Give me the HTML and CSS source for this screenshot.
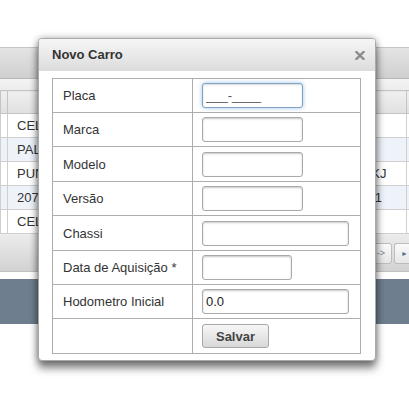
FILE: index.html
```html
<!DOCTYPE html>
<html lang="pt">
<head>
<meta charset="utf-8">
<title>Novo Carro</title>
<link rel="stylesheet" href="styles.css">
</head>
<body>
<div class="app">
  <div class="panel">
    <div class="panel-bar"></div>
    <div class="panel-gap"></div>
    <table class="grid">
      <colgroup><col class="c0"><col class="c1"><col class="c2"><col class="c3"></colgroup>
      <thead><tr><th></th><th></th><th></th><th></th></tr></thead>
      <tbody>
        <tr><td></td><td>CELTA</td><td></td><td></td></tr>
        <tr class="alt"><td></td><td>PALIO</td><td></td><td></td></tr>
        <tr><td></td><td>PUNTO</td><td>ABKJ</td><td></td></tr>
        <tr class="alt"><td></td><td>207</td><td>2011</td><td></td></tr>
        <tr><td></td><td>CELTA</td><td></td><td></td></tr>
      </tbody>
    </table>
    <div class="panel-foot">
      <div class="pager">
        <span class="pg-btn pg-next">-&gt;</span>
        <span class="pg-btn pg-last">&#9658;</span>
      </div>
    </div>
  </div>
  <div class="band"></div>
</div>

<div class="dialog">
  <div class="dlg-head">
    <span class="dlg-title">Novo Carro</span>
    <svg class="dlg-close" width="10" height="9" viewBox="0 0 10 9"><path d="M1.5 1 L8.5 8 M8.5 1 L1.5 8" stroke="#8c8c8c" stroke-width="2.4" stroke-linecap="square"/></svg>
  </div>
  <div class="dlg-body">
    <table class="form">
      <tr><td class="lbl">Placa</td><td class="fld"><input class="in in-s focus" type="text" value="___-____"></td></tr>
      <tr><td class="lbl">Marca</td><td class="fld"><input class="in in-s" type="text"></td></tr>
      <tr class="tall"><td class="lbl">Modelo</td><td class="fld"><input class="in in-s" type="text"></td></tr>
      <tr><td class="lbl">Versão</td><td class="fld"><input class="in in-s" type="text"></td></tr>
      <tr class="tall"><td class="lbl">Chassi</td><td class="fld"><input class="in in-l" type="text"></td></tr>
      <tr><td class="lbl">Data de Aquisição *</td><td class="fld"><input class="in in-d" type="text"></td></tr>
      <tr><td class="lbl">Hodometro Inicial</td><td class="fld"><input class="in in-l" type="text" value="0.0"></td></tr>
      <tr class="tall"><td class="lbl"></td><td class="fld"><button class="btn" type="button">Salvar</button></td></tr>
    </table>
  </div>
</div>
</body>
</html>
```

FILE: styles.css
```css
* { box-sizing: border-box; }
html, body { margin: 0; padding: 0; }
body {
  width: 409px;
  height: 403px;
  overflow: hidden;
  background: #fff;
  font-family: "Liberation Sans", Arial, sans-serif;
  font-size: 13px;
  color: #333;
  position: relative;
}

.app { padding-top: 47px; }

.panel-bar {
  height: 32px;
  background: linear-gradient(#e4e4e4, #cfcfcf);
  border-top: 1px solid #c6c6c6;
  border-bottom: 1px solid #b9b9b9;
}
.panel-gap {
  height: 11px;
  background: linear-gradient(#f4f4f4, #ececec);
}

.grid {
  border-collapse: collapse;
  table-layout: fixed;
  width: 430px;
}
.grid .c0 { width: 7px; }
.grid .c1 { width: 337px; }
.grid .c2 { width: 62px; }
.grid .c3 { width: 24px; }
.grid th {
  height: 23px;
  background: linear-gradient(#f0f0f0, #e0e0e0);
  border: 1px solid #c4c4c4;
  padding: 0;
}
.grid td {
  height: 24px;
  border: 1px solid #cfcfcf;
  padding: 0 0 0 9px;
  white-space: nowrap;
  overflow: hidden;
  color: #333;
}
.grid td:first-child { padding: 0; }
.grid tr.alt td { background: #eef3fa; }

.panel-foot {
  height: 38px;
  background: linear-gradient(#ececec, #d2d2d2);
  border-bottom: 1px solid #c0c0c0;
  display: flex;
  justify-content: flex-end;
  align-items: center;
  padding-top: 1px;
}
.pager { display: flex; gap: 2px; }
.pg-btn {
  width: 22px;
  height: 21px;
  border: 1px solid #bdbdbd;
  border-radius: 3px;
  background: linear-gradient(#fafafa, #e6e6e6);
  font-size: 9px;
  color: #6f8397;
  display: flex;
  align-items: center;
  justify-content: center;
}
.pg-last {
  width: 15px;
  border-right: none;
  border-radius: 3px 0 0 3px;
  justify-content: flex-end;
  padding-right: 1px;
  color: #54708c;
  font-size: 7px;
}

.band {
  margin-top: 7px;
  height: 45px;
  background: #6e7e8e;
}

/* dialog */
.dialog {
  position: absolute;
  left: 38px;
  top: 38px;
  width: 338px;
  background: #fff;
  border: 1px solid #a9a9a9;
  border-radius: 4px;
  box-shadow: 0 7px 9px rgba(0, 0, 0, 0.5), 0 0 7px rgba(0, 0, 0, 0.3);
}
.dlg-head {
  height: 32px;
  display: flex;
  align-items: center;
  justify-content: space-between;
  padding: 0 10px 1px 13px;
  background: linear-gradient(#f6f6f6, #dcdcdc);
  border-radius: 3px 3px 0 0;
}
.dlg-title { font-weight: bold; color: #333; font-size: 13px; }
.dlg-close { display: block; margin-top: 1px; }

.dlg-body { padding: 7px 14px 6px 13px; }

.form {
  width: 309px;
  border-collapse: collapse;
  table-layout: fixed;
}
.form td {
  border: 1px solid #adadad;
  height: 34px;
  padding: 0;
  vertical-align: middle;
}
.form tr.tall td { height: 35px; }
.form .lbl { width: 140px; padding-left: 10px; color: #333; }
.form .fld { padding-left: 9px; }

.in {
  display: block;
  height: 25px;
  border: 1px solid #aaa;
  border-radius: 3px;
  box-shadow: inset 0 1px 2px rgba(0, 0, 0, 0.22);
  padding: 0 3px;
  font-family: "Liberation Sans", Arial, sans-serif;
  font-size: 13px;
  color: #222;
  background: #fff;
  outline: none;
}
.in-s { width: 101px; }
.in-l { width: 147px; }
.in-d { width: 90px; }
.in.focus {
  border-color: #7ea3c4;
  box-shadow: inset 0 1px 2px rgba(0, 0, 0, 0.15), 0 0 4px rgba(82, 150, 210, 0.55);
  color: #555;
}

.btn {
  display: block;
  width: 67px;
  height: 24px;
  border: 1px solid #a8a8a8;
  border-radius: 3px;
  background: linear-gradient(#f7f7f7, #d8d8d8);
  font-family: "Liberation Sans", Arial, sans-serif;
  font-size: 13px;
  font-weight: bold;
  color: #444;
  padding: 0;
}
```
